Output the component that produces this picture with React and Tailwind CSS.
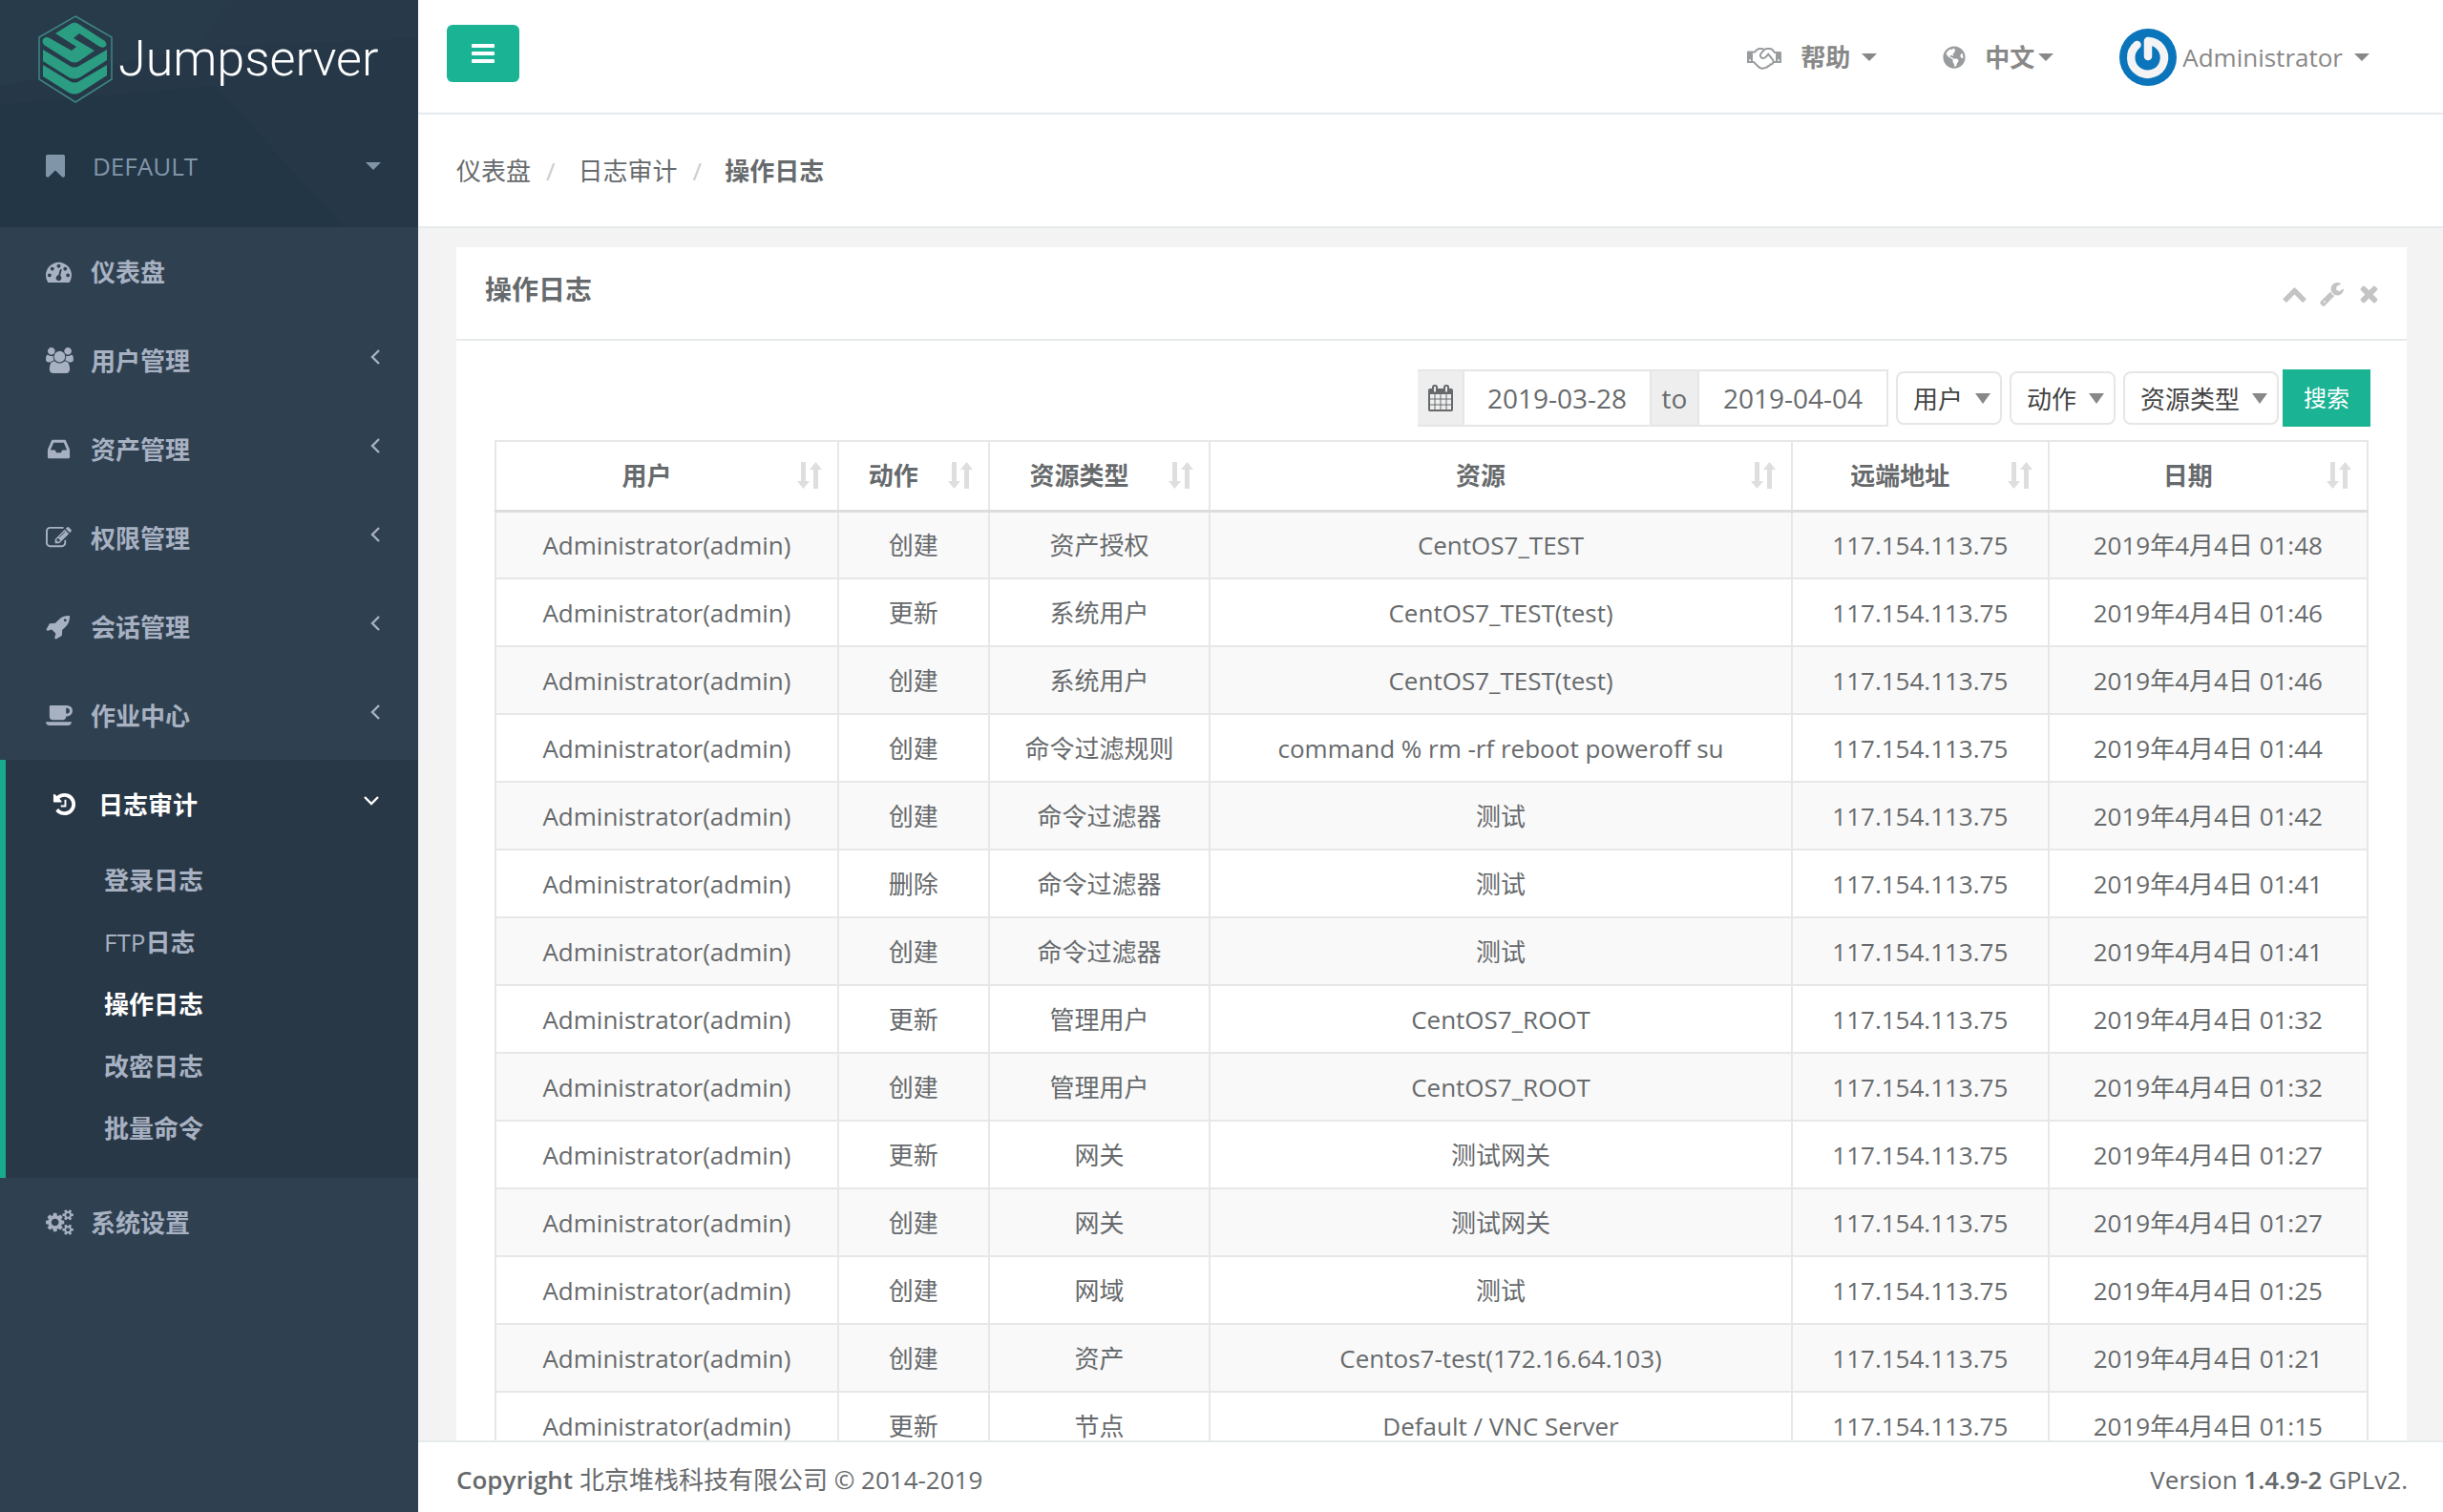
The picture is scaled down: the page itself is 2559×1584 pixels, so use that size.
import { FaGlobeAmericas } from 'react-icons/fa';

const ICONS = {
  bookmark: {
    w: 1792,
    d: 'M1420 128q23 0 44 9 33 13 52.5 41t19.5 62v1289q0 34-19.5 62t-52.5 41q-19 8-44 8-48 0-83-32l-441-424-441 424q-36 33-83 33-23 0-44-9-33-13-52.5-41t-19.5-62v-1289q0-34 19.5-62t52.5-41q21-9 44-9h1048z',
  },
  bars: {
    w: 1792,
    d: 'M1664 1344v128q0 26-19 45t-45 19h-1408q-26 0-45-19t-19-45v-128q0-26 19-45t45-19h1408q26 0 45 19t19 45zm0-512v128q0 26-19 45t-45 19h-1408q-26 0-45-19t-19-45v-128q0-26 19-45t45-19h1408q26 0 45 19t19 45zm0-512v128q0 26-19 45t-45 19h-1408q-26 0-45-19t-19-45v-128q0-26 19-45t45-19h1408q26 0 45 19t19 45z',
  },
  dashboard: {
    w: 1792,
    d: 'M384 1152q0-53-37.5-90.5t-90.5-37.5-90.5 37.5-37.5 90.5 37.5 90.5 90.5 37.5 90.5-37.5 37.5-90.5zm192-448q0-53-37.5-90.5t-90.5-37.5-90.5 37.5-37.5 90.5 37.5 90.5 90.5 37.5 90.5-37.5 37.5-90.5zm428 481l101-382q6-26-7.5-48.5t-38.5-29.5-48 6.5-30 39.5l-101 382q-60 5-107 43.5t-63 98.5q-20 77 20 146t117 89 146-20 89-117q16-60-6-117t-72-91zm660-33q0-53-37.5-90.5t-90.5-37.5-90.5 37.5-37.5 90.5 37.5 90.5 90.5 37.5 90.5-37.5 37.5-90.5zm-640-640q0-53-37.5-90.5t-90.5-37.5-90.5 37.5-37.5 90.5 37.5 90.5 90.5 37.5 90.5-37.5 37.5-90.5zm448 192q0-53-37.5-90.5t-90.5-37.5-90.5 37.5-37.5 90.5 37.5 90.5 90.5 37.5 90.5-37.5 37.5-90.5zm320 448q0 261-141 483-19 29-54 29h-1402q-35 0-54-29-141-221-141-483 0-182 71-348t191-286 286-191 348-71 348 71 286 191 191 286 71 348z',
  },
  users: {
    w: 1920,
    d: 'M593 896q-162 5-265 128h-134q-82 0-138-40.5t-56-118.5q0-353 124-353 6 0 43.5 21t97.5 42.5 119 21.5q67 0 133-23-5 37-5 66 0 139 81 256zm1071 637q0 120-73 189.5t-194 69.5h-874q-121 0-194-69.5t-73-189.5q0-53 3.5-103.5t14-109 26.5-108.5 43-97.5 62-81 85.5-53.5 111.5-20q10 0 43 21.5t73 48 107 48 135 21.5 135-21.5 107-48 73-48 43-21.5q61 0 111.5 20t85.5 53.5 62 81 43 97.5 26.5 108.5 14 109 3.5 103.5zm-1024-1277q0 106-75 181t-181 75-181-75-75-181 75-181 181-75 181 75 75 181zm704 384q0 159-112.5 271.5t-271.5 112.5-271.5-112.5-112.5-271.5 112.5-271.5 271.5-112.5 271.5 112.5 112.5 271.5zm576 225q0 78-56 118.5t-138 40.5h-134q-103-123-265-128 81-117 81-256 0-29-5-66 66 23 133 23 59 0 119-21.5t97.5-42.5 43.5-21q124 0 124 353zm-128-609q0 106-75 181t-181 75-181-75-75-181 75-181 181-75 181 75 75 181z',
  },
  inbox: {
    w: 1792,
    d: 'M1151 960h316q-1-3-2.5-8.5t-2.5-7.5l-212-496h-708l-212 496q-1 3-2.5 8.5t-2.5 7.5h316l95 192h320zm513 30v482q0 26-19 45t-45 19h-1408q-26 0-45-19t-19-45v-482q0-62 25-123l238-552q10-25 36.5-42t52.5-17h832q26 0 52.5 17t36.5 42l238 552q25 61 25 123z',
  },
  edit: {
    w: 1792,
    d: 'M888 1184l116-116-152-152-116 116v56h96v96h56zm440-720q-16-16-33 1l-350 350q-17 17-1 33t33-1l350-350q17-17 1-33zm80 594v190q0 119-84.5 203.5t-203.5 84.5h-832q-119 0-203.5-84.5t-84.5-203.5v-832q0-119 84.5-203.5t203.5-84.5h832q63 0 117 25 15 7 18 23 3 17-9 29l-49 49q-14 14-32 8-23-6-45-6h-832q-66 0-113 47t-47 113v832q0 66 47 113t113 47h832q66 0 113-47t47-113v-126q0-13 9-22l64-64q15-15 35-7t20 29zm-96-738l288 288-672 672h-288v-288zm444 132l-92 92-288-288 92-92q28-28 68-28t68 28l152 152q28 28 28 68t-28 68z',
  },
  rocket: {
    w: 1792,
    d: 'M1440 448q0-40-28-68t-68-28-68 28-28 68 28 68 68 28 68-28 28-68zm224-288q0 249-75.5 430.5t-253.5 360.5q-81 80-195 176l-20 379q-2 16-16 26l-384 224q-7 4-16 4-12 0-23-9l-64-64q-13-14-8-32l85-276-281-281-276 85q-3 1-9 1-14 0-23-9l-64-64q-17-19-5-39l224-384q10-14 26-16l379-20q96-114 176-195 188-187 358-258t431-71q14 0 24 9.5t10 22.5z',
  },
  coffee: {
    w: 1920,
    d: 'M1664 576q0-80-56-136t-136-56h-64v384h64q80 0 136-56t56-136zm-1664 768h1792q0 106-75 181t-181 75h-1280q-106 0-181-75t-75-181zm1856-768q0 159-112.5 271.5t-271.5 112.5h-64v32q0 92-66 158t-158 66h-704q-92 0-158-66t-66-158v-736q0-26 19-45t45-19h1152q159 0 271.5 112.5t112.5 271.5z',
  },
  history: {
    w: 1792,
    d: 'M1664 896q0 156-61 298t-164 245-245 164-298 61q-172 0-327-72.5t-264-204.5q-7-10-6.5-22.5t8.5-20.5l137-138q10-9 25-9 16 2 23 12 73 95 179 147t225 52q104 0 198.5-40.5t163.5-109.5 109.5-163.5 40.5-198.5-40.5-198.5-109.5-163.5-163.5-109.5-198.5-40.5q-98 0-188 35.5t-160 101.5l137 138q31 30 14 69-17 40-59 40h-448q-26 0-45-19t-19-45v-448q0-42 40-59 39-17 69 14l130 129q107-101 244.5-156.5t284.5-55.5q156 0 298 61t245 164 164 245 61 298zm-640-288v448q0 14-9 23t-23 9h-320q-14 0-23-9t-9-23v-64q0-14 9-23t23-9h224v-352q0-14 9-23t23-9h64q14 0 23 9t9 23z',
  },
  cogs: {
    w: 1920,
    d: 'M896 896q0-106-75-181t-181-75-181 75-75 181 75 181 181 75 181-75 75-181zm768 512q0-52-38-90t-90-38-90 38-38 90q0 53 37.5 90.5t90.5 37.5 90.5-37.5 37.5-90.5zm0-1024q0-52-38-90t-90-38-90 38-38 90q0 53 37.5 90.5t90.5 37.5 90.5-37.5 37.5-90.5zm-384 421v185q0 10-7 19.5t-16 10.5l-155 24q-11 35-32 76 34 48 90 115 7 11 7 20 0 12-7 19-23 30-82.5 89.5t-78.5 59.5q-11 0-21-7l-115-90q-37 19-77 31-11 108-23 155-7 24-30 24h-186q-11 0-20-7.5t-10-17.5l-23-153q-34-10-75-31l-118 89q-7 7-20 7-11 0-21-8-144-133-144-160 0-9 7-19 10-14 41-53t47-61q-23-44-35-82l-152-24q-10-1-17-9.5t-7-19.5v-185q0-10 7-19.5t16-10.5l155-24q11-35 32-76-34-48-90-115-7-11-7-20 0-12 7-20 22-30 82-89t79-59q11 0 21 7l115 90q34-18 77-32 11-108 23-154 7-24 30-24h186q11 0 20 7.5t10 17.5l23 153q34 10 75 31l118-89q8-7 20-7 11 0 21 8 144 133 144 160 0 8-7 19-12 16-42 54t-45 60q23 48 34 82l152 23q10 2 17 10.5t7 19.5zm640 533v140q0 16-149 31-12 27-30 52 51 113 51 138 0 4-4 7-122 71-124 71-8 0-46-47t-52-68q-20 2-30 2t-30-2q-14 21-52 68t-46 47q-2 0-124-71-4-3-4-7 0-25 51-138-18-25-30-52-149-15-149-31v-140q0-16 149-31 13-29 30-52-51-113-51-138 0-4 4-7 4-2 35-20t59-34 30-16q8 0 46 46.5t52 67.5q20-2 30-2t30 2q51-71 92-112l6-2q4 0 124 70 4 3 4 7 0 25-51 138 17 23 30 52 149 15 149 31zm0-1024v140q0 16-149 31-12 27-30 52 51 113 51 138 0 4-4 7-122 71-124 71-8 0-46-47t-52-68q-20 2-30 2t-30-2q-14 21-52 68t-46 47q-2 0-124-71-4-3-4-7 0-25 51-138-18-25-30-52-149-15-149-31v-140q0-16 149-31 13-29 30-52-51-113-51-138 0-4 4-7 4-2 35-20t59-34 30-16q8 0 46 46.5t52 67.5q20-2 30-2t30 2q51-71 92-112l6-2q4 0 124 70 4 3 4 7 0 25-51 138 17 23 30 52 149 15 149 31z',
  },
  handshake: {
    w: 2304,
    d: 'M192 1152q40 0 56-32t0-64-56-32-56 32 0 64 56 32zm1473-58q-10-13-38.5-50t-41.5-54-38-49-42.5-53-40.5-47-45-49l-125 140q-83 94-208.5 92t-205.5-98q-57-69-56.5-158t58.5-157l177-206q-22-11-51-16.5t-47.5-6-56.5.5-49 1q-92 0-158 66l-158 158h-155v544q5 0 21-.5t22 0 19.5 2 20.5 4.5 17.5 8.5 18.5 13.5l297 292q115 111 227 111 78 0 125-47 57 20 112.5-8t72.5-85q74 6 127-44 20-18 36-45.5t14-50.5q10 10 43 10 43 0 77-21t49.5-53 12-71.5-30.5-73.5zm159 58h96v-512h-93l-157-180q-66-76-169-76h-167q-89 0-146 67l-209 243q-28 33-28 75t27 75q43 51 110 52t111-49l193-218q25-23 53.5-21.5t47 27 8.5 56.5q16 19 56 63t60 68q29 36 82.5 105.5t64.5 84.5q52 66 60 140zm288 0q40 0 56-32t0-64-56-32-56 32 0 64 56 32zm192-576v640q0 26-19 45t-45 19h-434q-27 65-82 106.5t-125 51.5q-33 48-80.5 81.5t-102.5 45.5q-42 53-104.5 81.5t-128.5 24.5q-60 34-126 39.5t-127.5-14-117-53.5-103.5-81l-287-282h-358q-26 0-45-19t-19-45v-672q0-26 19-45t45-19h421q14-14 47-48t47.5-48 44-40 50.5-37.5 51-25.5 62-19.5 68-5.5h117q99 0 181 56 82-56 181-56h167q35 0 67 6t56.5 14.5 51.5 26.5 44.5 31 43 39.5 39 42 41 48 41.5 48.5h355q26 0 45 19t19 45z',
  },
  calendar: {
    w: 1792,
    d: 'M192 1664h288v-288h-288v288zm352 0h320v-288h-320v288zm-352-352h288v-320h-288v320zm352 0h320v-320h-320v320zm-352-384h288v-288h-288v288zm736 736h320v-288h-320v288zm-384-736h320v-288h-320v288zm768 736h288v-288h-288v288zm-384-352h320v-320h-320v320zm-352-864v-288q0-13-9.5-22.5t-22.5-9.5h-64q-13 0-22.5 9.5t-9.5 22.5v288q0 13 9.5 22.5t22.5 9.5h64q13 0 22.5-9.5t9.5-22.5zm736 864h288v-320h-288v320zm-384-384h320v-288h-320v288zm384 0h288v-288h-288v288zm32-480v-288q0-13-9.5-22.5t-22.5-9.5h-64q-13 0-22.5 9.5t-9.5 22.5v288q0 13 9.5 22.5t22.5 9.5h64q13 0 22.5-9.5t9.5-22.5zm384-64v1280q0 52-38 90t-90 38h-1408q-52 0-90-38t-38-90v-1280q0-52 38-90t90-38h128v-96q0-66 47-113t113-47h64q66 0 113 47t47 113v96h384v-96q0-66 47-113t113-47h64q66 0 113 47t47 113v96h128q52 0 90 38t38 90z',
  },
  chevronUp: {
    w: 1792,
    d: 'M1683 1331l-166 165q-19 19-45 19t-45-19l-531-531-531 531q-19 19-45 19t-45-19l-166-165q-19-19-19-45.5t19-45.5l742-741q19-19 45-19t45 19l742 741q19 19 19 45.5t-19 45.5z',
  },
  wrench: {
    w: 1792,
    d: 'M448 1472q0-26-19-45t-45-19-45 19-19 45 19 45 45 19 45-19 19-45zm644-420l-682 682q-37 37-90 37-52 0-91-37l-106-108q-38-36-38-90 0-53 38-91l681-681q39 98 114.5 173.5t173.5 114.5zm634-435q0 39-23 106-47 134-164.5 217.5t-258.5 83.5q-185 0-316.5-131.5t-131.5-316.5 131.5-316.5 316.5-131.5q58 0 121.5 16.5t107.5 46.5q16 11 16 28t-16 28l-293 169v224l193 107q5-3 79-48.5t135.5-81 70.5-35.5q15 0 23.5 10t8.5 25z',
  },
  times: {
    w: 1792,
    d: 'M1490 1322q0 40-28 68l-136 136q-28 28-68 28t-68-28l-294-294-294 294q-28 28-68 28t-68-28l-136-136q-28-28-28-68t28-68l294-294-294-294q-28-28-28-68t28-68l136-136q28-28 68-28t68 28l294 294 294-294q28-28 68-28t68 28l136 136q28 28 28 68t-28 68l-294 294 294 294q28 28 28 68z',
  },
};

function Icon({ name, className = 'h-7' }) {
  const icon = ICONS[name];
  return (
    <svg viewBox={`0 0 ${icon.w} 1792`} className={className} fill="currentColor" aria-hidden="true">
      <path d={icon.d} />
    </svg>
  );
}

function Caret({ className = 'w-4' }) {
  return (
    <svg viewBox="0 0 16 8" className={className} fill="currentColor" aria-hidden="true">
      <path d="M0 0h16L8 8z" />
    </svg>
  );
}

function Angle({ open }) {
  return (
    <svg viewBox="0 0 18 18" className="size-[18px]" fill="none" stroke="currentColor" strokeWidth="2.4" aria-hidden="true">
      <path d={open ? 'M2 5l7 7 7-7' : 'M13 2L6 9l7 7'} />
    </svg>
  );
}

function SortIcon() {
  return (
    <svg viewBox="0 0 26 28" className="ml-4 h-7 w-[26px] shrink-0 text-[#dedede]" fill="currentColor" aria-hidden="true">
      <path d="M4 0h5v20h4l-6.5 8L0 20h4zM17 28h5V8h4l-6.5-8L13 8h4z" />
    </svg>
  );
}

const menu = [
  { label: '仪表盘', icon: 'dashboard' },
  { label: '用户管理', icon: 'users', nested: true },
  { label: '资产管理', icon: 'inbox', nested: true },
  { label: '权限管理', icon: 'edit', nested: true },
  { label: '会话管理', icon: 'rocket', nested: true },
  { label: '作业中心', icon: 'coffee', nested: true },
];

const auditMenu = ['登录日志', 'FTP日志', '操作日志', '改密日志', '批量命令'];

const columns = [
  { label: '用户', width: 'w-[18.3%]' },
  { label: '动作', width: 'w-[8.05%]' },
  { label: '资源类型', width: 'w-[11.8%]' },
  { label: '资源', width: 'w-[31.1%]' },
  { label: '远端地址', width: 'w-[13.7%]' },
  { label: '日期', width: 'w-[17.05%]' },
];

const logs = [
  ['创建', '资产授权', 'CentOS7_TEST', '01:48'],
  ['更新', '系统用户', 'CentOS7_TEST(test)', '01:46'],
  ['创建', '系统用户', 'CentOS7_TEST(test)', '01:46'],
  ['创建', '命令过滤规则', 'command % rm -rf reboot poweroff su', '01:44'],
  ['创建', '命令过滤器', '测试', '01:42'],
  ['删除', '命令过滤器', '测试', '01:41'],
  ['创建', '命令过滤器', '测试', '01:41'],
  ['更新', '管理用户', 'CentOS7_ROOT', '01:32'],
  ['创建', '管理用户', 'CentOS7_ROOT', '01:32'],
  ['更新', '网关', '测试网关', '01:27'],
  ['创建', '网关', '测试网关', '01:27'],
  ['创建', '网域', '测试', '01:25'],
  ['创建', '资产', 'Centos7-test(172.16.64.103)', '01:21'],
  ['更新', '节点', 'Default / VNC Server', '01:15'],
];

function Logo() {
  return (
    <a href="#" className="flex items-center gap-1.5 pl-10">
      <svg viewBox="0 0 78 92" className="h-[92px] w-[78px] shrink-0" aria-hidden="true">
        <path d="M39 1L77 23v44L39 91 1 67V23z" fill="none" stroke="#3d8583" strokeWidth="1.5" />
        <g fill="#2a9d82">
          <path d="M34 9q4-3 8 0l28 18q3 4 0 6-3 2-7-1L43 19l-6 5 22 13-16 11q-5 3-10 0L6 31q-3-4 0-7 3-2 6 0l23 13 5-4-22-14z" />
          <path d="M5 36l28 17q5 3 10 0l29-17v11L44 65q-6 3-12 0L5 48z" />
          <path d="M5 52l28 17q5 3 10 0l29-17v11L44 81q-6 3-12 0L5 64z" />
        </g>
      </svg>
      <span className="font-[Roboto,sans-serif] text-[52px] leading-[92px] font-light text-white">Jumpserver</span>
    </a>
  );
}

function Sidebar() {
  return (
    <aside className="w-[438px] shrink-0 bg-[#2f4050] text-[#a7b1c2]">
      <div className="relative h-[238px] overflow-hidden bg-[#263848]">
        <svg viewBox="0 0 438 238" preserveAspectRatio="none" className="absolute inset-0 size-full" aria-hidden="true">
          <path d="M0 0h240l-30 50L0 90z" fill="#283b4a" />
          <path d="M240 0h198v40L210 50z" fill="#283a4a" />
          <path d="M225 90l135 148H0V110z" fill="#233646" />
        </svg>
        <div className="relative pt-4">
          <Logo />
          <button className="flex h-[132px] w-full items-center pr-[39px] pl-12 text-[#8095a8]">
            <Icon name="bookmark" className="-ml-1 h-7" />
            <span className="ml-[25px] flex-1 text-left">DEFAULT</span>
            <Caret />
          </button>
        </div>
      </div>

      <nav className="font-bold">
        {menu.map((item) => (
          <a key={item.label} href="#" className="flex h-[93px] items-center pr-9 pl-12">
            <span className="w-[47px]">
              <Icon name={item.icon} className="h-[27px]" />
            </span>
            <span className="flex-1">{item.label}</span>
            {item.nested && <span className="pb-2"><Angle /></span>}
          </a>
        ))}
        <div className="border-l-[6px] border-[#19aa8d] bg-[#293846] pb-5">
          <a href="#" className="flex h-[93px] items-center pr-10 pl-12 text-white">
            <span className="w-[49px]">
              <Icon name="history" className="h-[27px]" />
            </span>
            <span className="flex-1">日志审计</span>
            <span className="pb-2"><Angle open /></span>
          </a>
          {auditMenu.map((label) => (
            <a
              key={label}
              href="#"
              className={`flex h-[65px] items-center pl-[103px] ${label === '操作日志' ? 'text-white' : ''}`}
            >
              {label.startsWith('FTP') ? <span><span className="font-normal">FTP</span>日志</span> : label}
            </a>
          ))}
        </div>
        <a href="#" className="flex h-[93px] items-center pl-12">
          <span className="w-[47px]">
            <Icon name="cogs" className="h-[27px]" />
          </span>
          系统设置
        </a>
      </nav>
    </aside>
  );
}

function Topbar() {
  return (
    <header className="flex h-[120px] items-center border-b-2 border-[#e7eaec] bg-white pt-0.5 pr-[77px] pl-[30px] text-[#888]">
      <button className="mb-2 flex h-[60px] w-[76px] items-center justify-center rounded-md bg-[#1ab394] text-white" aria-label="菜单">
        <Icon name="bars" className="h-7" />
      </button>
      <div className="ml-auto flex items-center gap-[69px]">
        <button className="flex items-center font-bold">
          <Icon name="handshake" className="mr-5 h-7 text-[#999c9e]" />
          帮助
          <Caret className="ml-3 w-4" />
        </button>
        <button className="flex items-center font-bold">
          <FaGlobeAmericas className="mr-5 size-6 text-[#999c9e]" />
          中文
          <Caret className="ml-1 w-4" />
        </button>
        <button className="flex items-center">
          <svg viewBox="0 0 60 60" className="mr-1.5 size-[60px]" fill="none" strokeLinecap="round" aria-hidden="true">
            <circle cx="30" cy="30" r="30" fill="#0b75bb" />
            <path d="M18.5 17A17.4 17.4 0 1 0 30 13v16" stroke="#f4f4f4" strokeWidth="8.5" strokeLinejoin="round" />
          </svg>
          Administrator
          <Caret className="ml-3 w-4" />
        </button>
      </div>
    </header>
  );
}

function Breadcrumb() {
  return (
    <div className="flex h-[119px] items-center border-b-2 border-[#e7eaec] bg-white pl-10">
      <a href="#">仪表盘</a>
      <span className="mr-6 ml-4 text-[#ccc]">/</span>
      <a href="#">日志审计</a>
      <span className="mr-6 ml-4 text-[#ccc]">/</span>
      <strong>操作日志</strong>
    </div>
  );
}

function FilterSelect({ label, width }) {
  return (
    <div className={`relative ${width}`}>
      <select
        aria-label={label}
        className="h-14 w-full appearance-none rounded-lg border-2 border-[#e5e6e7] bg-white pt-0.5 pl-4 text-[#444]"
      >
        <option>{label}</option>
      </select>
      <svg viewBox="0 0 16 11" className="pointer-events-none absolute top-[23px] right-3 w-4 text-[#888]" fill="currentColor" aria-hidden="true">
        <path d="M0 0h16L8 11z" />
      </svg>
    </div>
  );
}

function Filters() {
  return (
    <form className="flex h-[60px] items-center justify-end gap-2">
      <div className="flex h-[60px] border-y-2 border-[#e5e6e7]">
        <span className="flex w-[47px] items-center justify-center bg-[#eee]">
          <Icon name="calendar" className="h-7" />
        </span>
        <input aria-label="开始日期" defaultValue="2019-03-28" className="w-[198px] border-x-2 border-[#e5e6e7] text-center text-[28px]" />
        <span className="flex w-12 items-center justify-center bg-[#eee] text-[28px]">to</span>
        <input aria-label="结束日期" defaultValue="2019-04-04" className="w-[200px] border-x-2 border-[#e5e6e7] text-center text-[28px]" />
      </div>
      <FilterSelect label="用户" width="w-[111px]" />
      <FilterSelect label="动作" width="w-[111px]" />
      <FilterSelect label="资源类型" width="w-[163px]" />
      <button type="button" className="-mr-0.5 -ml-1 h-[60px] w-[92px] bg-[#1ab394] text-[24px] text-white">搜索</button>
    </form>
  );
}

function LogTable() {
  return (
    <table className="mt-3.5 w-full table-fixed border-collapse text-center">
      <thead>
        <tr className="h-[73px]">
          {columns.map((col) => (
            <th key={col.label} className={`border-2 border-b-[3px] border-[#e7e7e7] border-b-[#ddd] p-0 ${col.width}`}>
              <div className="flex items-center px-4">
                <span className="flex-1">{col.label}</span>
                <SortIcon />
              </div>
            </th>
          ))}
        </tr>
      </thead>
      <tbody>
        {logs.map(([action, type, resource, time], i) => (
          <tr key={i} className="h-[71px] odd:bg-[#f9f9f9]">
            <td className="border-2 border-[#e7e7e7] p-0">Administrator(admin)</td>
            <td className="border-2 border-[#e7e7e7] p-0">{action}</td>
            <td className="border-2 border-[#e7e7e7] p-0">{type}</td>
            <td className="border-2 border-[#e7e7e7] p-0">{resource}</td>
            <td className="border-2 border-[#e7e7e7] p-0">117.154.113.75</td>
            <td className="border-2 border-[#e7e7e7] p-0">2019年4月4日 {time}</td>
          </tr>
        ))}
      </tbody>
    </table>
  );
}

export default function App() {
  return (
    <div className="flex h-screen overflow-hidden bg-[#f3f3f4] font-['Open_Sans','Noto_Sans_CJK_SC',sans-serif] text-[26px] leading-[36px] text-[#676a6c]">
      <Sidebar />
      <div className="flex min-w-0 flex-1 flex-col">
        <Topbar />
        <Breadcrumb />
        <main className="min-h-0 flex-1 overflow-hidden px-10 pt-5">
          <section className="-mr-0.5 bg-white">
            <div className="flex h-[98px] items-center border-b-2 border-[#e7eaec] pr-[26px] pl-[30px]">
              <h5 className="flex-1 pb-2 text-[28px] font-bold">操作日志</h5>
              <div className="flex gap-3 text-[#c4c4c4]">
                <button aria-label="收起"><Icon name="chevronUp" className="h-[27px]" /></button>
                <button aria-label="设置"><Icon name="wrench" className="h-[27px]" /></button>
                <button aria-label="关闭"><Icon name="times" className="h-[27px]" /></button>
              </div>
            </div>
            <div className="px-10 pt-[30px]">
              <Filters />
              <LogTable />
            </div>
          </section>
        </main>
        <footer className="flex h-[75px] shrink-0 items-center justify-between border-t-2 border-[#e7eaec] bg-white pt-1 pr-[37px] pl-10">
          <div><strong className="font-semibold">Copyright</strong> 北京堆栈科技有限公司 © 2014-2019</div>
          <div>Version <strong className="font-semibold">1.4.9-2</strong> GPLv2.</div>
        </footer>
      </div>
    </div>
  );
}
